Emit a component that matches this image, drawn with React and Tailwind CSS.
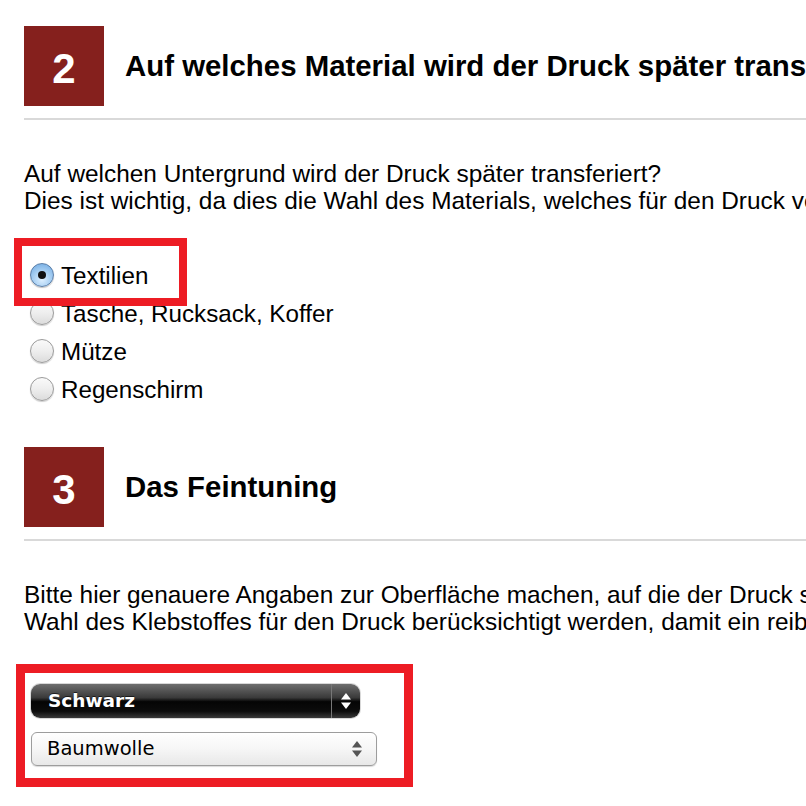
function SectionHeader({ n, title }) {
  return (
    <div>
      <div className="flex items-center gap-[21px]">
        <div className="w-20 h-20 bg-[#85201d] flex items-center justify-center text-white font-bold text-[42px] leading-none">
          <span className="mt-[6px]">{n}</span>
        </div>
        <h2 className="font-bold text-[29.4px] leading-none whitespace-nowrap">{title}</h2>
      </div>
      <div className="mt-3 h-[2px] bg-[#d9d9d9]" />
    </div>
  );
}

function Radio({ checked, label }) {
  return (
    <div className="flex items-center h-[38px]">
      <div className="ml-[6px] w-[24px] h-[24px] flex items-center justify-center">
        {checked ? (
          <div className="w-[24px] h-[24px] rounded-full border border-[#5c7fa8] bg-[radial-gradient(circle_at_50%_70%,#dff0ff_0%,#a9d0f3_45%,#6aa6e0_100%)] shadow-[0_1px_1px_rgba(0,0,0,0.25)] flex items-center justify-center">
            <div className="w-[8px] h-[8px] rounded-full bg-[#111]" />
          </div>
        ) : (
          <div className="w-[24px] h-[24px] rounded-full border border-[#9b9b9b] bg-[linear-gradient(to_bottom,#fafafa_0%,#eeeeee_50%,#dcdcdc_100%)] shadow-[0_1px_1px_rgba(0,0,0,0.2)]" />
        )}
      </div>
      <span className="ml-[7px] mt-[3px] text-[24.2px] leading-none">{label}</span>
    </div>
  );
}

function Arrows({ color }) {
  return (
    <svg width="12" height="18" viewBox="0 0 12 18">
      <path d="M6 1 L11 7.5 L1 7.5 Z" fill={color} />
      <path d="M1 10.5 L11 10.5 L6 17 Z" fill={color} />
    </svg>
  );
}

export default function App() {
  return (
    <div
      className="w-[806px] h-[806px] overflow-hidden bg-white text-black"
      style={{ fontFamily: '"Liberation Sans", Arial, sans-serif' }}
    >
      <div className="w-[1400px] pl-6 pt-[26px]">
        <SectionHeader n="2" title="Auf welches Material wird der Druck später transferiert?" />
        <p className="mt-10 text-[24.4px] leading-[27px] whitespace-nowrap">
          Auf welchen Untergrund wird der Druck später transferiert?
          <br />
          Dies ist wichtig, da dies die Wahl des Materials, welches für den Druck verwendet wird, beeinflusst.
        </p>

        <div className="relative mt-[42px]">
          <Radio checked label="Textilien" />
          <Radio label="Tasche, Rucksack, Koffer" />
          <Radio label="Mütze" />
          <Radio label="Regenschirm" />
          <div className="absolute left-[-10px] top-[-18px] w-[173px] h-[68px] border-[8px] border-[#ed1c24]" />
        </div>

        <div className="mt-[39px]">
          <SectionHeader n="3" title="Das Feintuning" />
        </div>
        <p className="mt-10 text-[24.4px] leading-[27px] whitespace-nowrap">
          Bitte hier genauere Angaben zur Oberfläche machen, auf die der Druck später transferiert wird. Dies muss bei der
          <br />
          Wahl des Klebstoffes für den Druck berücksichtigt werden, damit ein reibungsloser Transfer möglich ist.
        </p>

        <div
          className="mt-[29px] -ml-2 w-[397px] border-[9px] border-[#ed1c24] pl-[6px] pt-[11px] pb-[12px] flex flex-col gap-[14px]"
          style={{ fontFamily: '"DejaVu Sans", "Lucida Grande", sans-serif' }}
        >
          <div className="w-[329px] h-[34px] rounded-[9px] bg-[linear-gradient(to_bottom,#6e6e6e_0%,#3a3a3a_40%,#050505_52%,#0c0c0c_80%,#3a3a3a_100%)] flex items-center shadow-[0_0_0_1px_#d8d8d8]">
            <span className="flex-1 pl-[17px] text-white font-bold text-[18.5px] leading-none [text-shadow:0_-1px_0_rgba(0,0,0,0.6)]">
              Schwarz
            </span>
            <div className="w-[1px] h-full bg-[#777]" />
            <div className="w-[28px] h-full flex items-center justify-center">
              <Arrows color="#ffffff" />
            </div>
          </div>
          <div className="w-[346px] h-[34px] rounded-[6px] border border-[#9d9d9d] bg-[linear-gradient(to_bottom,#ffffff_0%,#f6f6f6_50%,#e8e8e8_100%)] shadow-[0_1px_1px_rgba(0,0,0,0.15)] flex items-center">
            <span className="flex-1 pl-[15px] text-[19.5px] leading-none text-black">Baumwolle</span>
            <div className="w-[36px] flex items-center justify-center pr-[2px]">
              <Arrows color="#555555" />
            </div>
          </div>
        </div>
      </div>
    </div>
  );
}
